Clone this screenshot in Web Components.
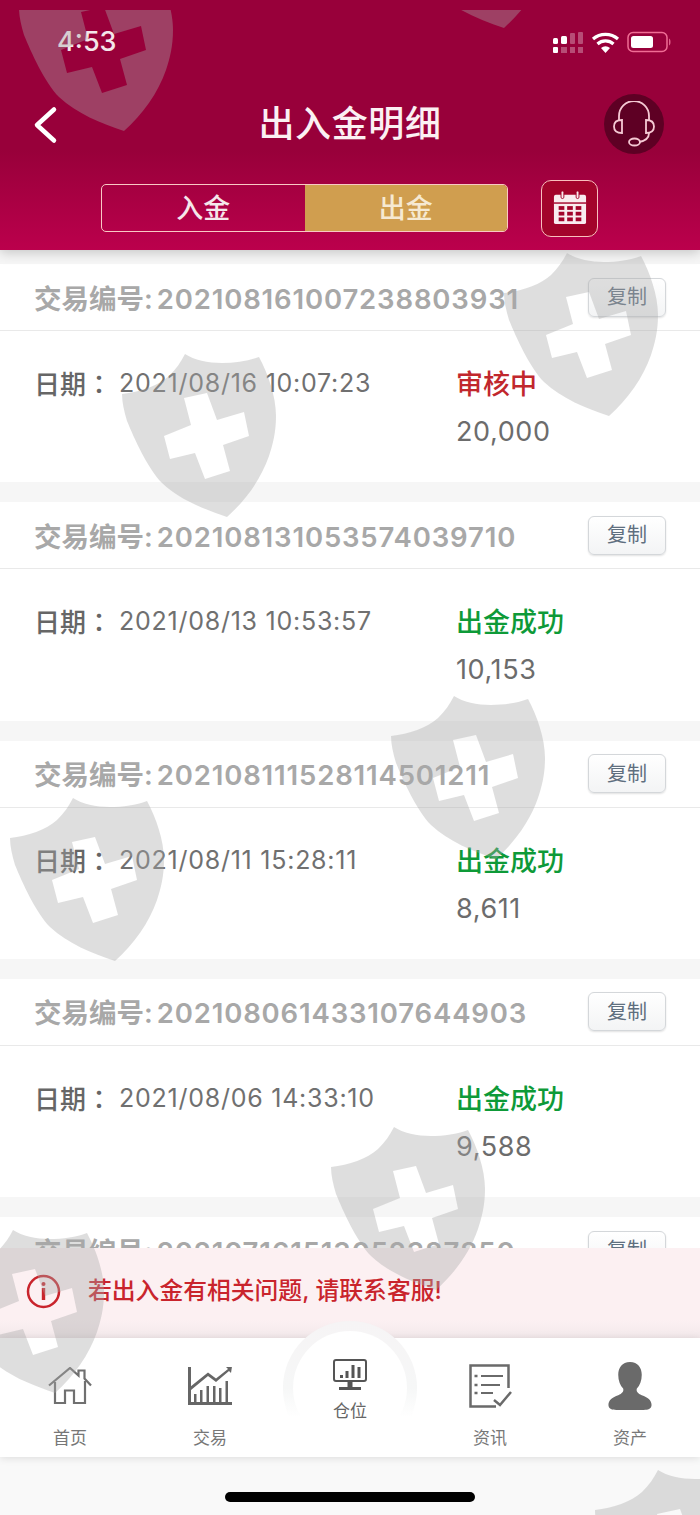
<!DOCTYPE html>
<html><head><meta charset="utf-8">
<style>
html,body{margin:0;padding:0;width:700px;height:1515px;overflow:hidden;background:#f8f8f8}
body{font-family:Inter,"Noto Sans CJK SC",sans-serif}
</style></head><body>
<x-app></x-app>
<script>
const CJK='Inter,"Noto Sans CJK SC",sans-serif';
function def(name,css,html){
  customElements.define(name,class extends HTMLElement{
    constructor(){super();const s=this.attachShadow({mode:'open'});
      s.innerHTML=`<style>${css}</style>${typeof html==='function'?html(this):html}`;}
  });
}
def('x-status',`:host{display:flex;height:84px;box-sizing:border-box;padding:26px 27px 0 57px;justify-content:space-between;align-items:flex-start;color:#fff}
.t{font:500 27px/32px Inter,sans-serif;color:#f3e6ea}
svg{display:block;margin-top:4px}`,
`<div class="t">4:53</div><svg width="120" height="26" viewBox="0 0 120 26">
<g fill="#fff"><rect x="0" y="8" width="5" height="6" rx="1.500"/><rect x="8" y="6" width="6" height="8" rx="1.500"/><rect x="0" y="17" width="5" height="6" rx="1"/></g>
<g fill="#fff" opacity=".3"><rect x="17" y="3" width="5" height="11" rx="1"/><rect x="25" y="2" width="5" height="12" rx="1"/><rect x="8" y="17" width="6" height="6"/><rect x="17" y="17" width="5" height="6"/><rect x="25" y="17" width="5" height="6"/></g>
<g fill="none" stroke="#fff" stroke-width="3.200"><path d="M40 9a19 19 0 0 1 25 0"/><path d="M44.500 14a12 12 0 0 1 16 0"/></g><path d="M48 18a7 7 0 0 1 9 0l-4.500 5z" fill="#fff"/>
<rect x="75" y="2.500" width="39" height="19" rx="5" fill="none" stroke="#f06d95" stroke-width="1.500"/><rect x="78" y="6" width="22" height="12" rx="2.500" fill="#fff"/><path d="M116 8.500c2 .5 2 6.500 0 7z" fill="#e0608a"/></svg>`);
def('x-nav',`:host{display:flex;align-items:center;justify-content:space-between;height:80px;padding:0 36px 0 33px;position:relative}
h1{margin:0;position:absolute;left:0;right:0;text-align:center;font:500 36px/44px ${CJK};color:#fbf0f3;top:18px;letter-spacing:.6px}
.b{width:60px;height:60px;border-radius:50%;background:#5e0024;display:flex;align-items:center;justify-content:center}`,
`<svg width="26" height="38" viewBox="0 0 26 38" style="margin-top:2px"><path d="M21 3.500 4 19l17 15.500" fill="none" stroke="#fff" stroke-width="4.500" stroke-linecap="round" stroke-linejoin="round"/></svg>
<h1>出入金明细</h1>
<div class="b"><svg width="42" height="46" viewBox="0 0 42 46" fill="none" stroke="#f5c9d4" stroke-width="1.800"><path d="M6 19v-4a15 15 0 0 1 30 0v4"/><path d="M9 19c-5 0-8 2-8 6.500S4 32 9 32zM33 19c5 0 8 2 8 6.500S38 32 33 32z"/><path d="M36 32c0 5-4 8-10 9"/><ellipse cx="21.500" cy="41" rx="5.500" ry="3.500"/></svg></div>`);
def('x-seg',`:host{display:flex;align-items:center;justify-content:center;height:58px;gap:33px;margin:15px 0 0 -1px}
.s{display:flex;width:407px;height:48px;box-sizing:border-box;border:1.500px solid #f9c9c4;border-radius:5px;overflow:hidden}
.s div{flex:1;text-align:center;font:500 27px/47px ${CJK};color:#f5e6ea}
.s .on{background:#d09e4f;color:#f6e9d2}
.c{width:57px;height:57px;box-sizing:border-box;border:1.500px solid #f9c0bb;border-radius:10px;background:#a3042b;display:flex;align-items:center;justify-content:center}`,
`<div class="s"><div>入金</div><div class="on">出金</div></div>
<div class="c"><svg width="34" height="34" viewBox="0 0 36 36"><path d="M3 4h30a2 2 0 0 1 2 2v27a2 2 0 0 1-2 2H3a2 2 0 0 1-2-2V6a2 2 0 0 1 2-2z" fill="#f9edef"/><rect x="1" y="12" width="34" height="1.500" fill="#a3042b"/><g fill="#f9edef" stroke="#a3042b" stroke-width="1"><rect x="8.500" y="0" width="3" height="8" rx="1.500"/><rect x="24.500" y="0" width="3" height="8" rx="1.500"/></g><g fill="#a3042b"><rect x="6" y="16" width="6" height="4"/><rect x="15" y="16" width="6" height="4"/><rect x="24" y="16" width="6" height="4"/><rect x="6" y="22" width="6" height="4"/><rect x="15" y="22" width="6" height="4"/><rect x="24" y="22" width="6" height="4"/><rect x="6" y="28" width="6" height="4"/><rect x="15" y="28" width="6" height="4"/><rect x="24" y="28" width="6" height="4"/></g></svg></div>`);
def('x-header',`:host{display:block;height:250px;flex:none;background:linear-gradient(#98003a 0,#98003a 60%,#bb004c 100%);box-shadow:0 2px 12px rgba(0,0,0,.22);position:relative;z-index:2}`,
`<x-status></x-status><x-nav></x-nav><x-seg></x-seg>`);
def('x-card',`:host{display:block;background:#fff;height:218.250px;margin-bottom:20px;color:#666}
.h{display:flex;align-items:center;justify-content:space-between;height:66px;padding:0 34px;border-bottom:1.500px solid #e9e9e9}
.id{font:600 27.500px/34px ${CJK};color:#a8a8a8;white-space:nowrap;padding-top:3px}
.id b{font-weight:600;margin-left:-3px;letter-spacing:.85px}
button{all:unset;width:78px;height:39px;box-sizing:border-box;border:1.500px solid #d4d7da;border-radius:6px;background:linear-gradient(#fff,#f3f4f5);text-align:center;font:400 20px/36px ${CJK};color:#5f6f7f;box-shadow:0 1px 2px rgba(0,0,0,.12)}
.b{display:flex;padding:33px 0 0 34px}
.l{width:422px;display:flex;font:400 25px/38px ${CJK};color:#707070;letter-spacing:.75px}
.l span:first-child{font:500 26px/38px ${CJK.replace('SC','TC')};letter-spacing:0;width:85px;color:#666;padding-top:2px}
.r{font:400 27px/48px ${CJK}}
.st{color:var(--c);font-weight:500;line-height:38px;margin-top:2px;margin-bottom:4px}
.a{color:#6c6c6c;line-height:48px;letter-spacing:.6px}`,
el=>`<div class="h"><div class="id">交易编号: <b>${el.getAttribute('no')}</b></div><button>复制</button></div>
<div class="b"><div class="l"><span>日期：</span><span>${el.getAttribute('date')}</span></div>
<div class="r" style="--c:${el.getAttribute('c')||'#0e9a38'}"><div class="st">${el.getAttribute('st')}</div><div class="a">${el.getAttribute('amt')}</div></div></div>`);
def('x-list',`:host{display:block;flex:1 1 0;min-height:0;overflow:hidden;background:#f6f6f6;padding-top:14px}`,`<slot></slot>`);
def('x-banner',`:host{display:flex;flex:none;height:90px;align-items:center;box-sizing:border-box;padding:0 0 4px 26px;gap:27px;background:linear-gradient(#fcf0f2 0,#fcf0f2 80%,#f3e9eb 100%);color:#c9242c;font:500 23.800px/30px ${CJK};position:relative;z-index:1}`,
`<svg width="35" height="35" viewBox="0 0 35 35" fill="none"><circle cx="17.500" cy="17.500" r="15.500" stroke="#c9242c" stroke-width="2.500"/><circle cx="17.500" cy="10" r="2" fill="#c9242c"/><rect x="15.800" y="14" width="3.400" height="12" fill="#c9242c"/></svg><span>若出入金有相关问题, 请联系客服!</span>`);
const tabIcons={
home:`<svg style="margin-bottom:9px" width="44" height="38" viewBox="0 0 44 38" fill="none" stroke="#707070" stroke-width="2.200"><path d="M1 18.500 22 1l8.500 7.500V3.500h6v8l6.500 7"/><path d="M7 15v21h10V23.500h9V36h11V14"/></svg>`,
tr:`<svg style="margin-bottom:9px" width="44" height="38" viewBox="0 0 44 38" fill="#666"><path d="M0 0h3v35h41v3H0z"/><path d="M2 20 20 5.500l8 6L40 2l-2-2 6-.5-1 6.500-2-2L28 15l-8-6L3 23z"/><path d="M6 27h2.500v8H6zM12 23h2.500v12H12zM18.500 19H21v16h-2.500zM25 19h2.500v16H25zM31 21h2.500v14H31zM37.500 14H40v21h-2.500z"/></svg>`,
pos:`<svg width="36" height="32" viewBox="0 0 36 32" fill="none" stroke="#555" stroke-width="2"><rect x="2" y="1" width="32" height="21" rx="2"/><path d="M9.500 19v-3M15 19v-7M21 19V6M27 19V8" stroke-width="3"/><path d="M18 22v6" stroke-width="5"/><path d="M7 29.500h22" stroke-width="3"/></svg>`,
news:`<svg style="margin-bottom:6px" width="43" height="44" viewBox="0 0 43 44" fill="none" stroke="#6a6a6a" stroke-width="2.500"><path d="M39.500 24V1.500H1.500v41H27"/><path d="M12 12h22M12 21h19M12 29h12" stroke-width="2"/><path d="M5.500 12h3M5.500 21h3M5.500 29h3" stroke-width="2.500"/><path d="M25 36l6 5 11-13" stroke-width="2.500"/></svg>`,
user:`<svg style="margin-bottom:3px" width="44" height="49" viewBox="0 0 44 50" fill="#6a6a6a"><path d="M22 0c8 0 12 6 12 13 0 6-2 11-5 14-1 3 1 5 5 7 6 2 10 5 10 10 0 4-4 5-8 5H8c-4 0-8-1-8-5 0-5 4-8 10-10 4-2 6-4 5-7-3-3-5-8-5-14C10 6 14 0 22 0z"/></svg>`};
def('x-tab',`:host{display:flex;flex:1;flex-direction:column;align-items:center;height:100%;position:relative}
.i{height:76px;display:flex;align-items:flex-end;justify-content:center}
.t{font:400 17px/22px ${CJK};color:#777;margin-top:13px}`,
el=>`<div class="i">${tabIcons[el.getAttribute('i')]}</div><div class="t">${el.getAttribute('t')}</div>`);
def('x-tabs',`:host{display:flex;flex:none;height:119px;background:#fff;box-shadow:0 1px 8px rgba(0,0,0,.12);position:relative;z-index:1}
.ring{position:absolute;left:283px;top:-17px;width:134px;height:134px;box-sizing:border-box;border-radius:50%;border:10px solid transparent;background:linear-gradient(#fff,#fff) padding-box,linear-gradient(#f6f4f5 0,#f6f7f7 50%,#fff 72%) border-box;z-index:0}
.c{position:absolute;left:280px;top:21px;width:140px;text-align:center;z-index:1}
.c .t{font:400 17px/22px ${CJK};color:#666;margin-top:9px}
.c svg{display:block;margin:0 auto}
.tabs{display:flex;flex:1;position:relative;z-index:1}
.g{flex:1}`,
`<div class="ring"></div><div class="tabs"><x-tab i="home" t="首页"></x-tab><x-tab i="tr" t="交易"></x-tab><div class="g"></div><x-tab i="news" t="资讯"></x-tab><x-tab i="user" t="资产"></x-tab></div><div class="c">${tabIcons.pos}<div class="t">仓位</div></div>`);
def('x-home',`:host{display:flex;flex:none;height:58px;justify-content:center;background:#f9f9f9;padding-top:35px;box-sizing:border-box}
i{display:block;width:250px;height:10px;border-radius:5px;background:#000}`,`<i></i>`);
const SH=[[19,-32],[399,-135],[504,253],[122,354],[391,696],[10,798],[331,1127],[-50,1230],[595,1470]];
def('x-watermark',`:host{position:absolute;left:0;top:10px;width:700px;height:1505px;overflow:hidden;pointer-events:none;z-index:5;display:block}
svg{position:absolute;overflow:visible}`,
`${SH.map(([x,y])=>`<svg width="156" height="164" viewBox="0 0 156 164" style="left:${x}px;top:${y-10}px"><path fill="#a7a7a7" fill-opacity=".38" fill-rule="evenodd" d="M0 40C18 38 36 32 47 22 54 15 59 8 63 0 72 6 86 9 100 9 113 9 126 7 137 3 146 20 154 42 154 62 154 78 151 90 147 102 139 125 124 146 105 163 82 155 58 146 40 129 26 115 12 84 5 67 2 57 0 48 0 40zM62 44 69 71 42 82 48 105 73 99 83 125 108 117 101 91 127 82 122 58 95 66 85 39z"/></svg>`).join('')}`);
def('x-app',`:host{display:flex;flex-direction:column;width:700px;height:1515px;position:relative;overflow:hidden}`,
`<x-header></x-header>
<x-list>
<x-card no="202108161007238803931" date="2021/08/16 10:07:23" st="审核中" c="#c1272d" amt="20,000"></x-card>
<x-card no="202108131053574039710" date="2021/08/13 10:53:57" st="出金成功" amt="10,153"></x-card>
<x-card no="202108111528114501211" date="2021/08/11 15:28:11" st="出金成功" amt="8,611"></x-card>
<x-card no="202108061433107644903" date="2021/08/06 14:33:10" st="出金成功" amt="9,588"></x-card>
<x-card no="202107161513052387850" date="2021/07/16 15:13:05" st="出金成功" amt="5,000"></x-card>
</x-list>
<x-banner></x-banner><x-tabs></x-tabs><x-home></x-home><x-watermark></x-watermark>`);
</script></body></html>
